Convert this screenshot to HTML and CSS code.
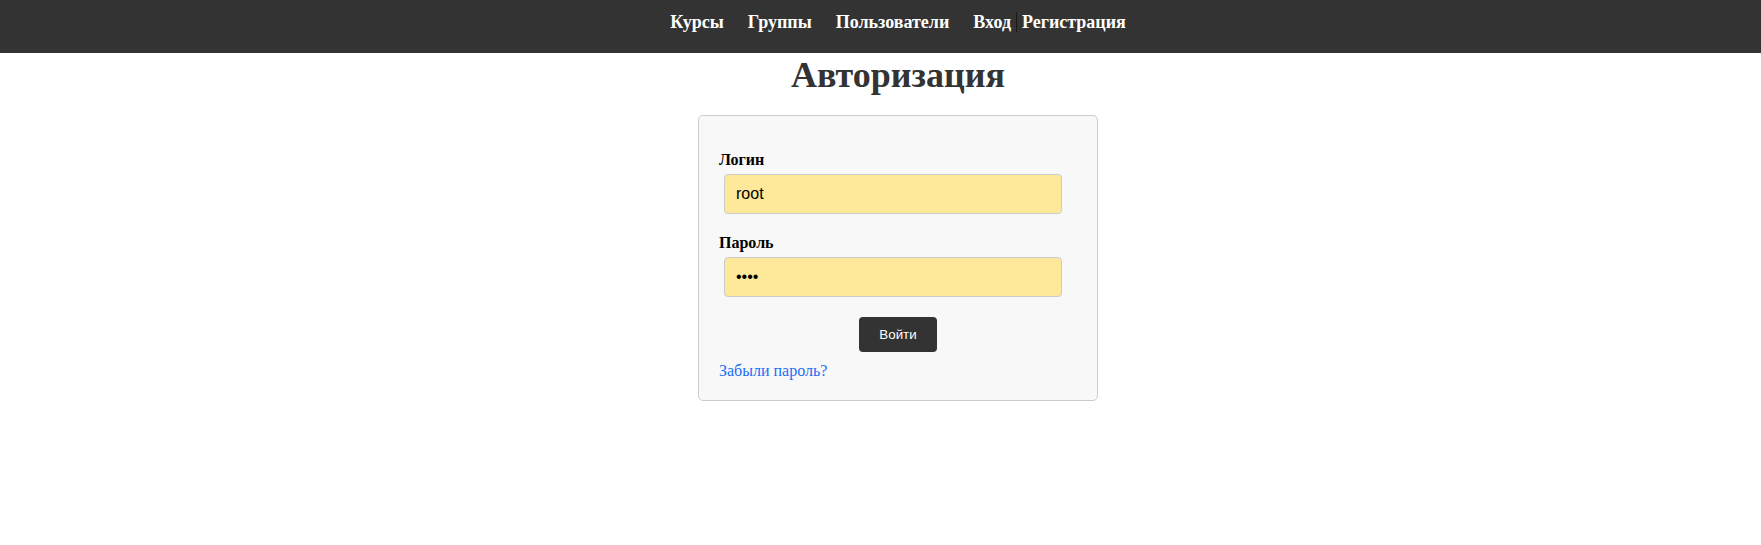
FILE: index.html
```html
<!DOCTYPE html>
<html lang="ru">
<head>
<meta charset="utf-8">
<title>Авторизация</title>
<link rel="stylesheet" href="styles.css">
</head>
<body>
<header class="topbar">
  <nav class="topbar__inner">
    <a class="topbar__link" href="#">Курсы</a>
    <a class="topbar__link" href="#">Группы</a>
    <a class="topbar__link" href="#">Пользователи</a>
    <div class="topbar__auth">
      <a class="topbar__link" href="#">Вход</a>
      <span class="topbar__sep"></span>
      <a class="topbar__link" href="#">Регистрация</a>
    </div>
  </nav>
</header>
<main class="page">
  <h1 class="page__title">Авторизация</h1>
  <form class="login-card">
    <div class="field">
      <label class="field__label" for="login">Логин</label>
      <input class="field__input" id="login" type="text" value="root">
    </div>
    <div class="field">
      <label class="field__label" for="password">Пароль</label>
      <input class="field__input" id="password" type="password" value="1234">
    </div>
    <div class="login-card__actions">
      <button class="login-card__btn" type="button">Войти</button>
    </div>
    <a class="login-card__forgot" href="#">Забыли пароль?</a>
  </form>
</main>
</body>
</html>
```

FILE: styles.css
```css
html, body {
  margin: 0;
  padding: 0;
  background: #ffffff;
}

body {
  font-family: "Liberation Serif", "Times New Roman", serif;
  font-size: 16px;
  color: #000;
}

.topbar {
  background: #333333;
  height: 53px;
  box-sizing: border-box;
  padding-top: 12px;
}

.topbar__inner {
  display: flex;
  justify-content: center;
  align-items: flex-start;
  gap: 24px;
  padding-left: 35px;
}

.topbar__link {
  color: #ffffff;
  text-decoration: none;
  font-weight: bold;
  font-size: 18px;
  line-height: 20px;
}

.topbar__auth {
  display: flex;
  align-items: center;
  gap: 5px;
}

.topbar__sep {
  width: 1px;
  height: 20px;
  background: #181818;
}

.page {
  display: flex;
  flex-direction: column;
  align-items: center;
  padding-left: 35px;
}

.page__title {
  margin: 1px 0 19px;
  font-size: 36px;
  font-weight: bold;
  color: #333333;
}

.login-card {
  box-sizing: border-box;
  width: 400px;
  padding: 20px;
  border: 1px solid #cccccc;
  border-radius: 5px;
  background: #f8f8f8;
}

.field {
  display: flow-root;
  margin: 15px 0;
}

.field__label {
  display: block;
  font-weight: bold;
  font-size: 16px;
}

.field__input {
  display: block;
  box-sizing: border-box;
  width: 338px;
  height: 40px;
  margin: 5px;
  padding: 0 11px;
  border: 1px solid #cccccc;
  border-radius: 4px;
  background: #fee899;
  font-family: "Liberation Sans", Arial, sans-serif;
  font-size: 16px;
  color: #000;
}

.login-card__actions {
  display: flex;
  justify-content: center;
  margin-bottom: 10px;
}

.login-card__btn {
  width: 78px;
  height: 35px;
  border: none;
  border-radius: 4px;
  background: #333333;
  color: #ffffff;
  font-family: "Liberation Sans", Arial, sans-serif;
  font-size: 13.333px;
}

.login-card__forgot {
  display: block;
  color: #1a6ef5;
  text-decoration: none;
  font-size: 16px;
}
```
